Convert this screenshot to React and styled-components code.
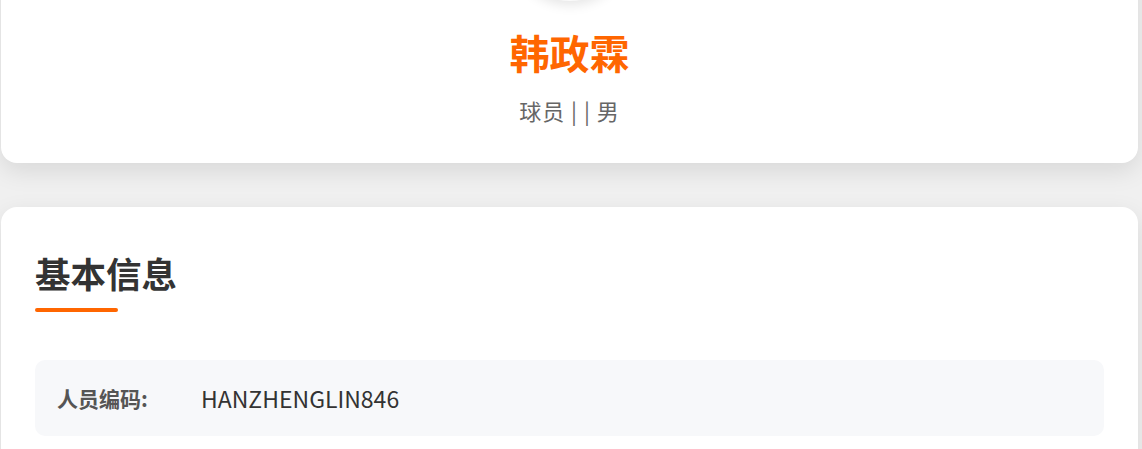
import React from "react";
import styled, { createGlobalStyle } from "styled-components";

const GlobalStyle = createGlobalStyle`
  html, body {
    margin: 0;
    padding: 0;
    background: #f0f0f0;
    font-family: "Noto Sans CJK SC", "Noto Sans", sans-serif;
    overflow: hidden;
  }
`;

const Page = styled.div`
  display: flex;
  flex-direction: column;
  gap: 44px;
  padding: 0 4px 40px 1px;
  margin-top: -179px;
`;

const Card = styled.section`
  background: #ffffff;
  border-radius: 16px;
  box-shadow: 0 8px 24px rgba(0, 0, 0, 0.1);
`;

const ProfileCard = styled(Card)`
  display: flex;
  flex-direction: column;
  align-items: center;
  padding: 60px 34px 38px;
`;

const Avatar = styled.div`
  width: 120px;
  height: 120px;
  border-radius: 50%;
  background: #fafafa;
  box-shadow: 0 4px 12px rgba(0, 0, 0, 0.1);
  margin-bottom: 27px;
`;

const Name = styled.h1`
  margin: 0;
  font-size: 40px;
  line-height: 48px;
  font-weight: 700;
  color: #ff6600;
`;

const Meta = styled.div`
  margin-top: 19px;
  font-size: 22px;
  line-height: 30px;
  letter-spacing: 1px;
  color: #666666;
`;

const InfoCard = styled(Card)`
  padding: 45px 34px 34px;
`;

const SectionTitle = styled.h2`
  margin: 0;
  font-size: 35.5px;
  line-height: 42px;
  font-weight: 700;
  color: #333333;
`;

const TitleBar = styled.div`
  width: 83px;
  height: 4px;
  border-radius: 2px;
  background: #ff6600;
  margin-top: 14px;
`;

const InfoList = styled.div`
  display: flex;
  flex-direction: column;
  gap: 16px;
  margin-top: 48px;
`;

const InfoRow = styled.div`
  display: flex;
  align-items: center;
  height: 76px;
  padding: 0 22px;
  background: #f7f8fa;
  border-radius: 10px;
`;

const Label = styled.span`
  width: 144px;
  flex-shrink: 0;
  font-size: 21px;
  font-weight: 700;
  color: #555555;
`;

const Value = styled.span`
  font-size: 23px;
  color: #333333;
`;

export default function App() {
  return (
    <>
      <GlobalStyle />
      <Page>
        <ProfileCard>
          <Avatar />
          <Name>韩政霖</Name>
          <Meta>球员 | | 男</Meta>
        </ProfileCard>
        <InfoCard>
          <SectionTitle>基本信息</SectionTitle>
          <TitleBar />
          <InfoList>
            <InfoRow>
              <Label>人员编码:</Label>
              <Value>HANZHENGLIN846</Value>
            </InfoRow>
          </InfoList>
        </InfoCard>
      </Page>
    </>
  );
}
